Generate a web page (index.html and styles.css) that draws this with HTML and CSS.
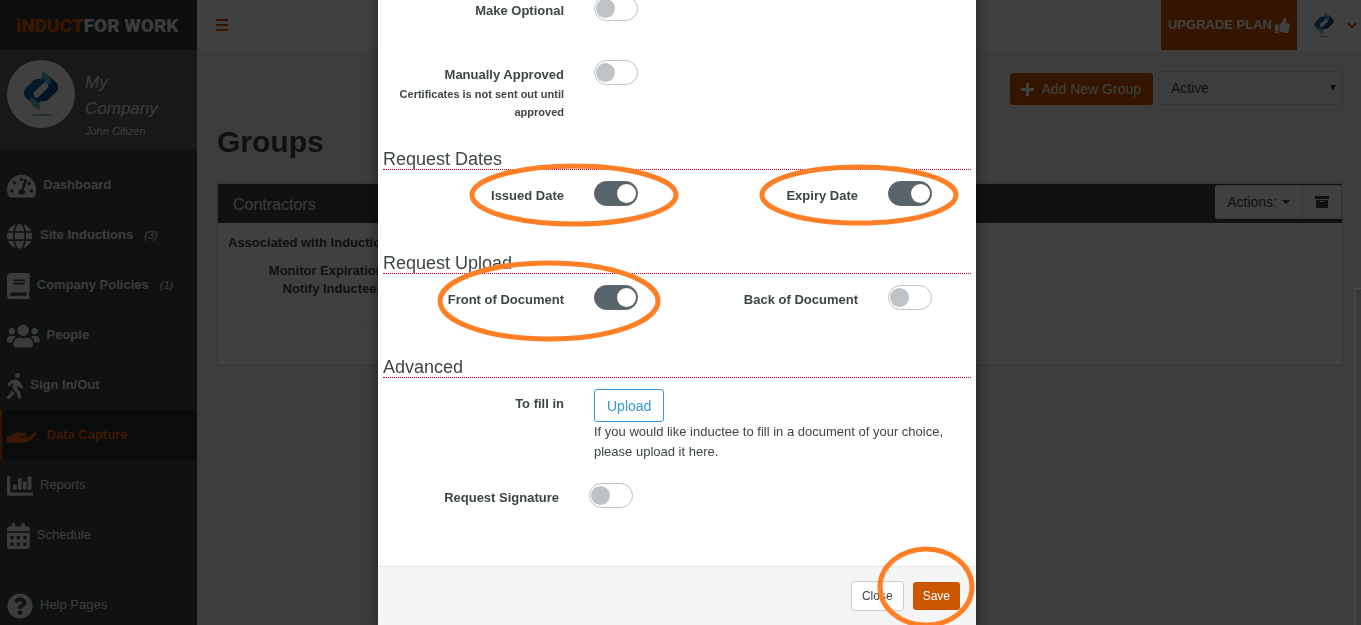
FILE: index.html
```html
<!DOCTYPE html>
<html lang="en">

<head>
  <meta charset="UTF-8" />
  <meta name="viewport" content="width=device-width, initial-scale=1.0" />
  <title>Groups</title>
  <link rel="stylesheet" href="styles.css">
</head>

<body>
  <svg class="sprite" aria-hidden="true">
    <symbol id="company-logo" viewBox="0 0 36 46">
      <path fill="#1b62ad" d="M1 23q-1-3 1-5l8-8q3-3 7-2l7 1-12 11q-3 3 0 6l6 5q-5 4-9 1l-6-5q-2-2-2-4z" />
      <path fill="#0d4a92" d="M35 15q1 3-1 5l-8 8q-3 3-7 2l-7-1 12-11q3-3 0-6l-6-5q5-4 9-1l6 5q2 2 2 4z" />
      <path fill="#57bcc0" d="M19 0q9 4 9 11l-1 3q-9-5-8-14zM7 26q9 4 10 9l-1 4Q7 35 7 26z" />
      <ellipse cx="18" cy="44" rx="11" ry="1" fill="#79b9c5" />
    </symbol>
  </svg>

  <div class="wrapper">
    <aside class="sidebar">
      <a href="#" class="brand"><span>iNDUCT</span>FOR WORK</a>
      <div class="profile">
        <span class="avatar"><svg width="36" height="46"><use href="#company-logo" /></svg></span>
        <div class="profile-info">
          <p class="company">My Company</p>
          <p class="user">John Citizen</p>
        </div>
      </div>
      <nav>
        <ul class="menu">
          <li><a href="#">
            <svg viewBox="0 0 576 512"><path fill-rule="evenodd" d="M288 32C129 32 0 161 0 320c0 53 14 102 39 145 6 9 16 15 27 15h444c11 0 21-6 27-15 25-43 39-92 39-145C576 161 447 32 288 32zm0 64a32 32 0 1 1 0 64 32 32 0 0 1 0-64zM96 384a32 32 0 1 1 0-64 32 32 0 0 1 0 64zm48-160a32 32 0 1 1 0-64 32 32 0 0 1 0 64zm303-48a32 32 0 1 1-30 56 32 32 0 0 1 30-56zm33 208a32 32 0 1 1 0-64 32 32 0 0 1 0 64zM376 119c13 4 19 17 15 30l-61 184c32 20 26 58 14 83H232c-20-55 5-88 52-96l61-186c5-12 18-19 31-15z" /></svg>
            <b>Dashboard</b></a></li>
          <li><a href="#">
            <svg viewBox="0 0 512 512"><path d="M336.5 160C322 70.7 287.8 8 248 8s-74 62.7-88.5 152h177zM152 256c0 22.2 1.2 43.5 3.3 64h185.3c2.1-20.5 3.3-41.8 3.3-64s-1.2-43.5-3.3-64H155.3c-2.1 20.5-3.3 41.8-3.3 64zm324.7-96c-28.6-67.9-86.5-120.4-158-141.6 24.4 33.8 41.2 84.7 50 141.6h108zM177.2 18.4C105.8 39.6 47.8 92.1 19.3 160h108c8.7-56.9 25.5-107.8 49.9-141.6zM487.4 192H372.7c2.1 21 3.3 42.5 3.3 64s-1.2 43-3.3 64h114.6c5.5-20.5 8.6-41.8 8.6-64s-3.1-43.5-8.5-64zM120 256c0-21.5 1.2-43 3.3-64H8.6C3.2 212.5 0 233.8 0 256s3.2 43.5 8.6 64h114.6c-2-21-3.2-42.5-3.2-64zm39.5 96c14.5 89.3 48.7 152 88.5 152s74-62.7 88.5-152h-177zm159.3 141.6c71.4-21.2 129.4-73.7 158-141.6h-108c-8.8 56.9-25.6 107.8-50 141.6zM19.3 352c28.6 67.9 86.5 120.4 158 141.6-24.4-33.8-41.2-84.7-50-141.6h-108z" /></svg>
            <b>Site Inductions</b><i>(3)</i></a></li>
          <li><a href="#">
            <svg viewBox="0 0 448 512"><path d="M448 360V24c0-13.300-10.700-24-24-24H64C28 0 0 28 0 64v384c0 36 28 64 64 64h360c13.300 0 24-10.700 24-24v-16c0-7.500-3.500-14.300-8.900-18.700-4.200-15.400-4.200-59.300 0-74.700 5.400-4.300 8.900-11.100 8.900-18.600zM128 134c0-3.300 2.700-6 6-6h212c3.300 0 6 2.700 6 6v20c0 3.300-2.700 6-6 6H134c-3.300 0-6-2.700-6-6v-20zm0 64c0-3.300 2.700-6 6-6h212c3.300 0 6 2.700 6 6v20c0 3.300-2.700 6-6 6H134c-3.300 0-6-2.700-6-6v-20zm253.400 250H96c-17.700 0-32-14.300-32-32 0-17.600 14.400-32 32-32h285.400c-1.900 17.100-1.900 46.900 0 64z" /></svg>
            <b>Company Policies</b><i>(1)</i></a></li>
          <li><a href="#">
            <svg viewBox="0 0 640 512"><path d="M96 224c35.300 0 64-28.700 64-64s-28.700-64-64-64-64 28.700-64 64 28.700 64 64 64zm448 0c35.300 0 64-28.700 64-64s-28.700-64-64-64-64 28.700-64 64 28.700 64 64 64zm32 32h-64c-17.600 0-33.500 7.100-45.100 18.600 40.300 22.100 68.900 62 75.100 109.400h66c17.700 0 32-14.300 32-32v-32c0-35.300-28.700-64-64-64zm-256 0c61.900 0 112-50.100 112-112S381.900 32 320 32 208 82.100 208 144s50.100 112 112 112zm76.800 32h-8.300c-20.800 10-43.900 16-68.500 16s-47.600-6-68.500-16h-8.300C179.600 288 128 339.600 128 403.200V432c0 26.500 21.500 48 48 48h288c26.500 0 48-21.500 48-48v-28.800c0-63.600-51.600-115.200-115.200-115.200zm-223.700-13.400C161.500 263.100 145.600 256 128 256H64c-35.300 0-64 28.700-64 64v32c0 17.700 14.300 32 32 32h65.900c6.300-47.400 34.900-87.300 75.200-109.400z" /></svg>
            <b>People</b></a></li>
          <li><a href="#">
            <svg viewBox="0 0 320 512"><path d="M208 96c26.500 0 48-21.500 48-48S234.500 0 208 0s-48 21.500-48 48 21.500 48 48 48zm94.500 149.100l-23.300-11.800-9.700-29.400c-14.700-44.600-55.700-75.800-102.200-75.900-36-.1-55.900 10.100-93.300 25.200-21.600 8.700-39.300 25.200-49.700 46.200L17.600 213c-7.800 15.800-1.500 35 14.200 42.900 15.600 7.900 34.600 1.500 42.500-14.300L81 228c3.500-7 9.300-12.500 16.500-15.400l26.800-10.800-15.200 60.700c-5.200 20.800.4 42.900 14.900 58.800l59.900 65.400c7.200 7.900 12.300 17.400 14.900 27.700l18.300 73.300c4.300 17.100 21.700 27.600 38.800 23.300 17.100-4.300 27.600-21.700 23.300-38.800l-22.200-89c-2.600-10.300-7.700-19.900-14.900-27.700l-45.500-49.700 17.200-68.700 5.500 16.500c5.300 16.100 16.700 29.400 31.700 37l23.300 11.800c15.600 7.900 34.600 1.500 42.500-14.300 7.700-15.700 1.400-35.100-14.300-43zM73.600 385.800c-3.200 8.100-8 15.400-14.200 21.500l-50 50.100c-12.500 12.500-12.500 32.800 0 45.300s32.700 12.500 45.200 0l59.400-59.400c6.100-6.100 10.900-13.400 14.200-21.500l13.500-33.800c-55.300-60.300-38.700-41.800-47.400-53.700l-20.700 51.500z" /></svg>
            <b>Sign In/Out</b></a></li>
          <li class="active"><a href="#">
            <svg viewBox="0 0 640 512"><path d="M565.300 328.100c-11.800-10.700-30.200-10-42.600 0L430.300 402c-11.300 9.100-25.400 14-40 14H272c-8.800 0-16-7.200-16-16s7.200-16 16-16h78.300c15.900 0 30.700-10.900 33.300-26.600 3.300-20-12.100-37.400-31.600-37.400H192c-27 0-53.100 9.300-74.100 26.300L71.400 384H16c-8.800 0-16 7.200-16 16v96c0 8.800 7.200 16 16 16h356.800c14.500 0 28.600-4.900 40-14L564 377c15.200-12.100 16.400-35.300 1.300-48.900z" transform="translate(0 -130)" /></svg>
            <b>Data Capture</b></a></li>
          <li><a href="#">
            <svg viewBox="0 0 512 512"><path d="M0 80q0-16 16-16h32q16 0 16 16v304h432q16 0 16 16v32q0 16-16 16H32q-32 0-32-32zM120 240q0-16 16-16h40q16 0 16 16v88h-72zM216 118q0-16 16-16h40q16 0 16 16v210h-72zM312 176q0-16 16-16h40q16 0 16 16v152h-72zM408 84q0-16 16-16h40q16 0 16 16v244h-72z" /></svg>
            Reports</a></li>
          <li><a href="#">
            <svg viewBox="0 0 448 512"><path fill-rule="evenodd" d="M0 464c0 26.500 21.500 48 48 48h352c26.500 0 48-21.500 48-48V192H0zM64 256h64v64H64zm128 0h64v64h-64zm128 0h64v64h-64zM64 384h64v64H64zm128 0h64v64h-64zm128 0h64v64h-64zM400 64h-48V16c0-8.800-7.200-16-16-16h-32c-8.800 0-16 7.200-16 16v48H160V16c0-8.800-7.200-16-16-16h-32c-8.800 0-16 7.200-16 16v48H48C21.500 64 0 85.500 0 112v48h448v-48c0-26.500-21.500-48-48-48z" /></svg>
            Schedule</a></li>
          <li class="help"><a href="#">
            <svg viewBox="0 0 512 512"><path d="M504 256c0 137-111 248-248 248S8 393 8 256C8 119 119 8 256 8s248 111 248 248zM262.700 90c-54.500 0-89.300 23-116.600 63.800-3.500 5.300-2.400 12.400 2.700 16.200l34.700 26.300c5.200 4 12.600 3 16.700-2.100 17.800-22.700 30.100-35.800 57.300-35.800 20.400 0 45.700 13.100 45.700 33 0 15-12.400 22.600-32.600 33.900C247.100 238.500 216 255 216 296v4c0 6.600 5.400 12 12 12h56c6.600 0 12-5.400 12-12v-1.300c0-28.500 83.200-29.700 83.200-106.700 0-58-60.200-102-116.500-102zM256 338c-25.400 0-46 20.600-46 46s20.600 46 46 46 46-20.600 46-46-20.600-46-46-46z" /></svg>
            Help Pages</a></li>
        </ul>
      </nav>
    </aside>

    <div class="page">
      <header class="topbar">
        <button type="button" class="icon-btn" aria-label="Toggle menu">
          <svg width="12" height="12" viewBox="0 0 12 12"><path d="M0 0h12v2H0zM0 5h12v2H0zM0 10h12v2H0z" /></svg>
        </button>
        <div class="topbar-right">
          <a href="#" class="upgrade">UPGRADE PLAN
            <svg width="15" height="15" viewBox="0 0 512 512"><path d="M104 224H24c-13.300 0-24 10.700-24 24v240c0 13.300 10.700 24 24 24h80c13.300 0 24-10.700 24-24V248c0-13.300-10.700-24-24-24zM64 472c-13.300 0-24-10.700-24-24s10.700-24 24-24 24 10.700 24 24-10.700 24-24 24zM384 81.500c0 42.400-26 66.200-33.300 94.500h101.700c33.400 0 59.400 27.700 59.600 58.100 0 17.900-7.600 37.200-19.500 49.200 9.800 23.400 8.200 56.100-9.400 79.500 8.700 25.900 0 57.700-16.400 74.800 4.300 17.600 2.200 32.600-6.100 44.600C440.200 511.600 389.600 512 344 512c-48.300 0-87.800-17.600-119.600-31.700-15.900-7.100-36.800-15.900-52.600-16.200-6.500-.1-11.800-5.500-11.800-12V238.300c0-3.200 1.300-6.300 3.600-8.500 39.600-39.100 56.600-80.600 89.100-113.100 14.800-14.800 20.200-37.200 25.400-58.900C282.500 39.300 291.800 0 312 0c24 0 72 8 72 81.500z" /></svg>
          </a>
          <button type="button" class="icon-btn account" aria-label="Account">
            <svg width="20" height="26"><use href="#company-logo" /></svg>
            <svg width="10" height="6" viewBox="0 0 10 6"><path d="M1 1l4 4 4-4" fill="none" stroke="currentColor" stroke-width="2" /></svg>
          </button>
        </div>
      </header>

      <main class="content">
        <div class="toolbar">
          <button type="button" class="add-btn">
            <svg width="13" height="13" viewBox="0 0 13 13"><path d="M5 0h3v5h5v3H8v5H5V8H0V5h5z" /></svg>
            Add New Group
          </button>
          <div class="select-wrap">
            <select aria-label="Status">
              <option>Active</option>
              <option>Archived</option>
            </select>
          </div>
        </div>
        <h1>Groups</h1>
        <section class="panel">
          <div class="panel-heading">
            <h2>Contractors</h2>
            <div class="btn-group">
              <button type="button">Actions: <span class="caret"></span></button>
              <button type="button" aria-label="Archive">
                <svg width="14" height="12" viewBox="0 0 14 12"><path fill-rule="evenodd" d="M0 0h14v3H0zM1 4h12v8H1zm4 1v1h4V5z" /></svg>
              </button>
            </div>
          </div>
          <div class="panel-body">
            <p>Associated with Inductions</p>
            <p class="notices">Monitor Expiration:<br>Notify Inductees:</p>
          </div>
          <div class="panel-footer"></div>
        </section>
      </main>
    </div>
  </div>

  <div class="mask">
    <div class="modal" role="dialog" aria-label="Edit document">
      <form class="modal-body">
        <div class="row">
          <label for="optional">Make Optional</label>
          <input type="checkbox" class="switch" id="optional">
        </div>
        <div class="row approved">
          <label for="approved">Manually Approved
            <small>Certificates is not sent out until approved</small>
          </label>
          <input type="checkbox" class="switch" id="approved">
        </div>

        <h3>Request Dates</h3>
        <div class="row">
          <label for="issued">Issued Date</label>
          <input type="checkbox" class="switch" id="issued" checked>
          <label for="expiry">Expiry Date</label>
          <input type="checkbox" class="switch" id="expiry" checked>
        </div>

        <h3>Request Upload</h3>
        <div class="row">
          <label for="front">Front of Document</label>
          <input type="checkbox" class="switch" id="front" checked>
          <label for="back">Back of Document</label>
          <input type="checkbox" class="switch" id="back">
        </div>

        <h3>Advanced</h3>
        <div class="row fill-in">
          <label for="upload">To fill in</label>
          <div class="upload">
            <button type="button" id="upload">Upload</button>
            <p>If you would like inductee to fill in a document of your choice, please upload it here.</p>
          </div>
        </div>
        <div class="row signature">
          <label for="signature">Request Signature</label>
          <input type="checkbox" class="switch" id="signature">
        </div>
      </form>
      <div class="modal-footer">
        <button type="button" class="close-btn">Close</button>
        <button type="button" class="save-btn">Save</button>
      </div>

      <!-- highlight rings -->
      <svg class="rings" aria-hidden="true">
        <ellipse cx="196" cy="215" rx="102" ry="29" />
        <ellipse cx="481" cy="215" rx="97" ry="28" />
        <ellipse cx="171" cy="321" rx="109" ry="38" />
        <ellipse cx="548" cy="607" rx="46" ry="38" />
      </svg>
    </div>
    <div class="scroll-thumb"></div>
  </div>
</body>

</html>
```
FILE: styles.css
```css
* {
  margin: 0;
  padding: 0;
  box-sizing: border-box;
}

body {
  font-family: "Liberation Sans", Arial, sans-serif;
  font-size: 13px;
  line-height: 20px;
  color: #3e4744;
  background-color: #f3f3f4;
  overflow: hidden;
}

a {
  color: inherit;
  text-decoration: none;
}

button,
select {
  font: inherit;
  color: inherit;
  cursor: pointer;
}

svg {
  fill: currentColor;
  flex: none;
}

.sprite {
  position: absolute;
  width: 0;
  height: 0;
}

.wrapper {
  display: flex;
  height: 100vh;
}

/**
 * sidebar
 */
.sidebar {
  width: 197px;
  flex: none;
  background-color: #3e4744;
  color: #e8eceb;
  overflow: hidden;
}

.brand {
  display: flex;
  align-items: center;
  height: 50px;
  padding: 2px 0 0 16px;
  background-color: #303836;
  font-family: Roboto, sans-serif;
  font-size: 19px;
  font-weight: 900;
  white-space: pre;
}

.brand span {
  color: #e66000;
}

.profile {
  display: flex;
  gap: 10px;
  height: 100px;
  padding: 10px 7px;
  background-color: #5c6461;
  font-style: italic;
}

.avatar {
  display: flex;
  align-items: center;
  justify-content: center;
  width: 68px;
  height: 68px;
  flex: none;
  border-radius: 50%;
  background-color: #fff;
}

.profile-info {
  width: 80px;
  padding-top: 10px;
}

.company {
  font-size: 17px;
  line-height: 26px;
}

.user {
  font-size: 11px;
  line-height: 18px;
}

.menu {
  list-style: none;
  padding-top: 10px;
}

.menu a {
  display: flex;
  align-items: center;
  gap: 7px;
  height: 50px;
  padding-left: 7px;
}

.menu svg {
  height: 26px;
  margin-top: 2px;
}

.menu i {
  margin-left: 4px;
  font-size: 11px;
}

.menu .active a {
  padding-left: 5px;
  border-left: 2px solid #cc5500;
  background-color: #282e2c;
  color: #ee6300;
}

.menu .help {
  margin-top: 20px;
}

/**
 * page
 */
.page {
  flex: 1;
  min-width: 0;
}

.topbar {
  display: flex;
  align-items: center;
  justify-content: space-between;
  height: 50px;
  padding: 0 4px 0 19px;
  background-color: #fff;
}

.topbar-right {
  display: flex;
  gap: 17px;
}

.icon-btn {
  display: flex;
  align-items: center;
  border: 0;
  background: none;
  color: #cc5500;
}

.account {
  gap: 13px;
}

.upgrade {
  display: flex;
  align-items: center;
  gap: 3px;
  height: 50px;
  padding: 0 7px;
  background-color: #cc5500;
  color: #fff;
  font-weight: bold;
}

.content {
  padding: 21px 18px 0 20px;
}

.toolbar {
  display: flex;
  justify-content: flex-end;
  align-items: flex-end;
  gap: 5px;
}

.add-btn {
  display: flex;
  align-items: center;
  gap: 7px;
  height: 32px;
  padding: 0 12px 0 11px;
  border: 0;
  border-radius: 3px;
  background-color: #cc5500;
  color: #fff;
  font-size: 14px;
}

.select-wrap {
  position: relative;
  width: 185px;
}

.select-wrap::after {
  content: "";
  position: absolute;
  right: 7px;
  top: 14px;
  border: 3px solid transparent;
  border-top: 6px solid #3e4744;
  border-bottom: 0;
}

.select-wrap select {
  display: block;
  width: 100%;
  height: 34px;
  padding: 0 12px;
  border: 1px solid #d0d0d0;
  border-radius: 4px;
  background: none;
  font-size: 14px;
  appearance: none;
}

h1 {
  margin: 17px 0 22px;
  font-size: 30px;
  line-height: 39px;
}

.panel {
  border: 1px solid #d8d8d8;
  background-color: #fff;
}

.panel-heading {
  display: flex;
  justify-content: space-between;
  align-items: flex-start;
  height: 39px;
  padding: 1px 0 0 15px;
  background-color: #3e4744;
}

.panel-heading h2 {
  color: #e8eceb;
  font-size: 16px;
  font-weight: normal;
  line-height: 40px;
}

.btn-group {
  display: flex;
}

.btn-group button {
  display: flex;
  align-items: center;
  gap: 5px;
  height: 34px;
  padding: 0 12px;
  border: 1px solid #dadada;
  border-left-width: 0;
  background-color: #fff;
  font-size: 14px;
}

.btn-group button:first-child {
  border-radius: 3px 0 0 3px;
}

.caret {
  border: 4px solid transparent;
  border-top-color: #3e4744;
  border-bottom: 0;
}

.panel-body {
  height: 105px;
  padding: 11px 10px;
  border-bottom: 1px solid #e7eaec;
  font-weight: bold;
}

.panel-body p {
  margin-bottom: 10px;
  line-height: 18px;
}

.panel-body .notices {
  width: 160px;
  text-align: right;
}

.panel-footer {
  height: 37px;
}

/**
 * mask and modal
 */
.mask {
  position: fixed;
  inset: 0;
  z-index: 10;
  padding-right: 7px;
  background-color: rgba(0, 0, 0, 0.75);
  overflow: hidden;
}

/* opened part way down the form */
.modal {
  position: relative;
  max-width: 598px;
  margin: -20px auto 0;
  background-color: #fff;
  box-shadow: 0 5px 15px rgba(0, 0, 0, 0.5);
}

.modal-body {
  padding: 16px 5px 0;
}

.row {
  display: grid;
  grid-template-columns: 2fr 1fr 2fr 1fr;
  align-items: start;
  min-height: 64px;
}

.row label {
  padding: 5px 15px 0;
  font-weight: bold;
  text-align: right;
}

.row small {
  display: block;
  font-size: 11px;
  line-height: 18px;
}

.row.approved {
  min-height: 89px;
}

.switch {
  position: relative;
  width: 44px;
  height: 25px;
  margin-left: 15px;
  border: 1px solid #bdc3c7;
  border-radius: 13px;
  background-color: #fff;
  appearance: none;
  cursor: pointer;
}

.switch::before {
  content: "";
  position: absolute;
  left: 1px;
  top: 2px;
  width: 19px;
  height: 19px;
  border-radius: 50%;
  background-color: #bdc3c7;
}

.switch:checked {
  border-color: #5a656b;
  background-color: #5a656b;
}

.switch:checked::before {
  left: 22px;
  background-color: #fff;
}

h3 {
  margin-bottom: 11px;
  border-bottom: 1px dotted #c0003c;
  font-size: 18px;
  font-weight: normal;
  line-height: 20px;
}

.row + h3 {
  margin-top: 8px;
}

.row.approved + h3 {
  margin-top: 0;
}

.row.fill-in {
  min-height: 94px;
}

.upload {
  grid-column: 2 / 5;
  padding: 0 15px;
}

.upload button {
  display: block;
  height: 33px;
  padding: 0 12px;
  border: 1px solid #3498db;
  border-radius: 3px;
  background-color: #fff;
  color: #3498db;
  font-size: 14px;
}

.row.signature {
  min-height: 83px;
  margin-left: -5px;
  margin-right: 5px;
}

.modal-footer {
  display: flex;
  justify-content: flex-end;
  align-items: center;
  gap: 9px;
  padding: 14px 16px 16px;
  border-top: 1px solid #e5e5e5;
  background-color: #f5f5f5;
  font-size: 12px;
}

.modal-footer button {
  padding: 0 10px;
  border-radius: 3px;
}

.close-btn {
  height: 30px;
  border: 1px solid #ccc;
  background-color: #fff;
}

.save-btn {
  height: 28px;
  border: 0;
  background-color: #cc5500;
  color: #fff;
}

.rings {
  position: absolute;
  left: 0;
  top: 0;
  width: 100%;
  height: 100%;
  overflow: visible;
  fill: none;
  stroke: #ff7f27;
  stroke-width: 5px;
  pointer-events: none;
}

.scroll-thumb {
  position: absolute;
  top: 288px;
  right: 0;
  bottom: 0;
  width: 6px;
  border: 1px solid #4a4a4a;
  border-width: 1px 0 0 1px;
  background-color: #3a3a3a;
}
```
